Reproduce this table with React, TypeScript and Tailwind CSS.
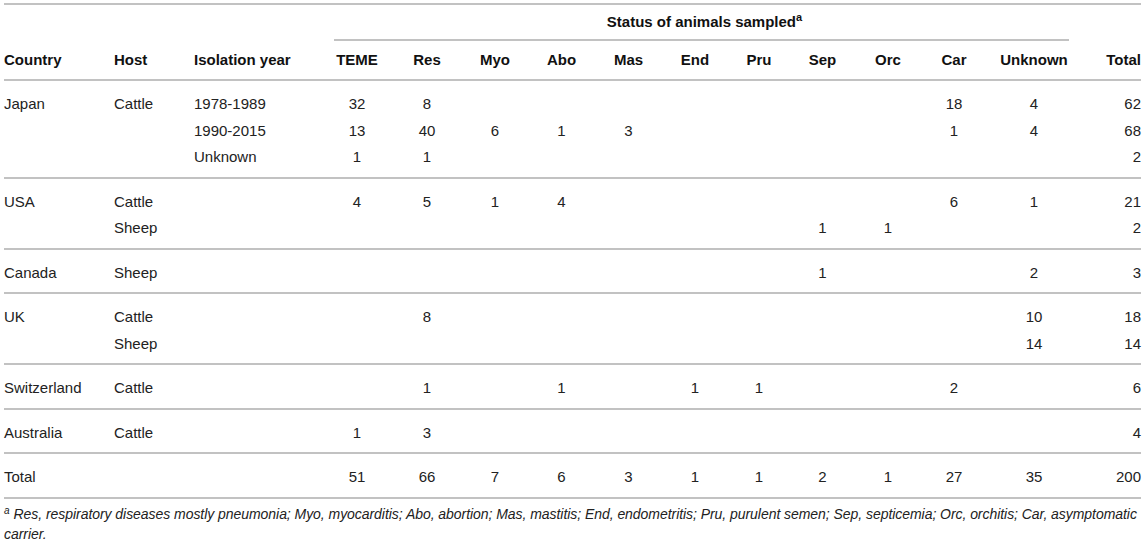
import React from "react";

const W = [
  "w-[110px] text-left",
  "w-[80px] text-left",
  "w-[128px] text-left",
  "w-[70px] text-center",
  "w-[70px] text-center",
  "w-[66px] text-center",
  "w-[67px] text-center",
  "w-[67px] text-center",
  "w-[66px] text-center",
  "w-[62px] text-center",
  "w-[65px] text-center",
  "w-[66px] text-center",
  "w-[66px] text-center",
  "w-[94px] text-center",
  "w-[60px] text-right",
];

type Cells = (string | number)[];

function Row({ cells, className = "" }: { cells: Cells; className?: string }) {
  return (
    <div className={"flex " + className}>
      {W.map((w, i) => (
        <div key={i} className={"shrink-0 whitespace-nowrap " + w}>
          {cells[i] ?? ""}
        </div>
      ))}
    </div>
  );
}

function Line() {
  return <div className="h-[2px] bg-[#c2c2c2]" />;
}

const groups: Cells[][] = [
  [
    ["Japan", "Cattle", "1978-1989", 32, 8, "", "", "", "", "", "", "", 18, 4, 62],
    ["", "", "1990-2015", 13, 40, 6, 1, 3, "", "", "", "", 1, 4, 68],
    ["", "", "Unknown", 1, 1, "", "", "", "", "", "", "", "", "", 2],
  ],
  [
    ["USA", "Cattle", "", 4, 5, 1, 4, "", "", "", "", "", 6, 1, 21],
    ["", "Sheep", "", "", "", "", "", "", "", "", 1, 1, "", "", 2],
  ],
  [["Canada", "Sheep", "", "", "", "", "", "", "", "", 1, "", "", 2, 3]],
  [
    ["UK", "Cattle", "", "", 8, "", "", "", "", "", "", "", "", 10, 18],
    ["", "Sheep", "", "", "", "", "", "", "", "", "", "", "", 14, 14],
  ],
  [["Switzerland", "Cattle", "", "", 1, "", 1, "", 1, 1, "", "", 2, "", 6]],
  [["Australia", "Cattle", "", 1, 3, "", "", "", "", "", "", "", "", "", 4]],
  [["Total", "", "", 51, 66, 7, 6, 3, 1, 1, 2, 1, 27, 35, 200]],
];

export default function App() {
  return (
    <div
      className="w-[1145px] h-[544px] bg-white px-[4px] text-[15px] text-[#222] overflow-hidden"
      style={{ fontFamily: '"Liberation Sans", Arial, sans-serif' }}
    >
      <div className="pt-[3px]">
        <Line />
        {/* status header */}
        <div className="flex">
          <div className="w-[318px] shrink-0" />
          <div className="w-[759px] shrink-0 flex flex-col">
            <div className="h-[34px] flex items-center justify-center font-bold text-[#111]">
              <span className="pl-[6px]">
                Status of animals sampled
                <sup className="text-[11px] font-bold">a</sup>
              </span>
            </div>
            <div className="mx-[12px] h-[2px] bg-[#c2c2c2]" />
          </div>
          <div className="w-[60px] shrink-0" />
        </div>
        <Row
          className="h-[38px] items-center font-bold text-[#111]"
          cells={[
            "Country",
            "Host",
            "Isolation year",
            "TEME",
            "Res",
            "Myo",
            "Abo",
            "Mas",
            "End",
            "Pru",
            "Sep",
            "Orc",
            "Car",
            "Unknown",
            "Total",
          ]}
        />
        <Line />
        {groups.map((g, gi) => (
          <div key={gi}>
            <div className="pt-[10px] pb-[6px] leading-[26.5px]">
              {g.map((r, ri) => (
                <Row key={ri} cells={r} />
              ))}
            </div>
            <Line />
          </div>
        ))}
        <div className="pt-[5px] text-[14px] leading-[20px] italic tracking-[-0.05px] text-[#222] whitespace-nowrap">
          <sup className="text-[10px] mr-[4px]">a</sup>
          Res, respiratory diseases mostly pneumonia; Myo, myocarditis; Abo, abortion; Mas, mastitis; End,
          endometritis; Pru, purulent semen; Sep, septicemia; Orc, orchitis; Car, asymptomatic
          <br />
          carrier.
        </div>
      </div>
    </div>
  );
}
